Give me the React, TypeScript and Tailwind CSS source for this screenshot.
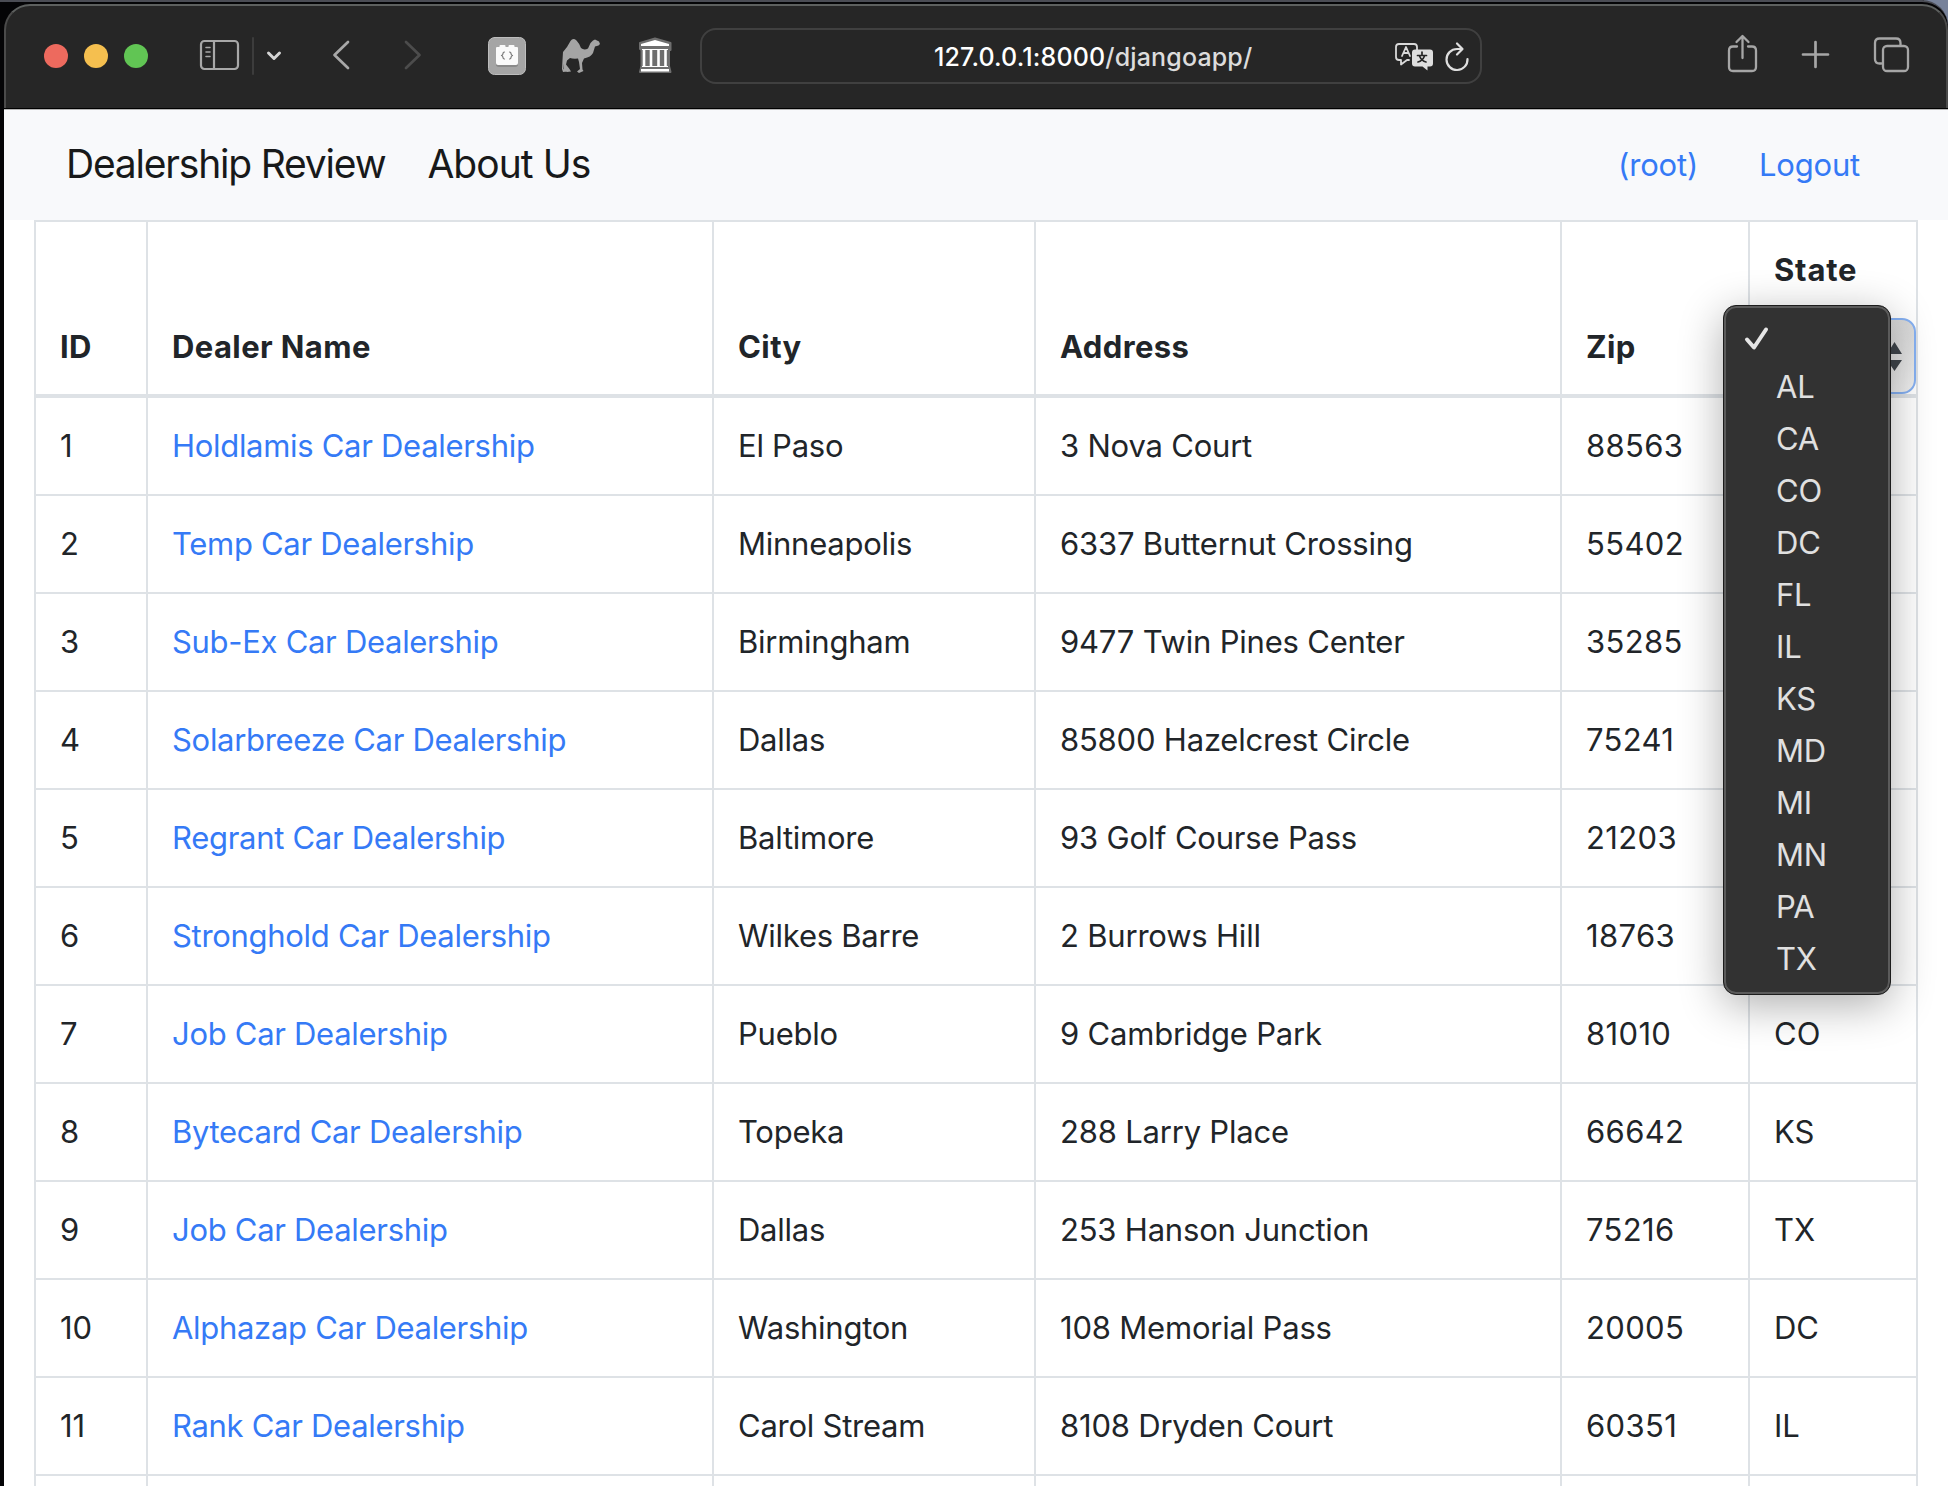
import React from "react";

const dealers: [string, string, string, string, string][] = [
  ["Holdlamis Car Dealership", "El Paso", "3 Nova Court", "88563", ""],
  ["Temp Car Dealership", "Minneapolis", "6337 Butternut Crossing", "55402", ""],
  ["Sub-Ex Car Dealership", "Birmingham", "9477 Twin Pines Center", "35285", ""],
  ["Solarbreeze Car Dealership", "Dallas", "85800 Hazelcrest Circle", "75241", ""],
  ["Regrant Car Dealership", "Baltimore", "93 Golf Course Pass", "21203", ""],
  ["Stronghold Car Dealership", "Wilkes Barre", "2 Burrows Hill", "18763", ""],
  ["Job Car Dealership", "Pueblo", "9 Cambridge Park", "81010", "CO"],
  ["Bytecard Car Dealership", "Topeka", "288 Larry Place", "66642", "KS"],
  ["Job Car Dealership", "Dallas", "253 Hanson Junction", "75216", "TX"],
  ["Alphazap Car Dealership", "Washington", "108 Memorial Pass", "20005", "DC"],
  ["Rank Car Dealership", "Carol Stream", "8108 Dryden Court", "60351", "IL"],
  ["", "", "", "", ""],
];

const states = ["AL", "CA", "CO", "DC", "FL", "IL", "KS", "MD", "MI", "MN", "PA", "TX"];

const cell = "border-r-2 border-b-2 border-[#dee2e6] pl-[24px] pt-[1px] flex items-center whitespace-nowrap";
const head = "border-r-2 border-[#dee2e6] pl-[24px] pb-[24px] flex items-end whitespace-nowrap tracking-[0.4px]";
const cols = "grid grid-cols-[112px_566px_322px_526px_188px_168px] border-l-2 border-[#dee2e6]";

function Toolbar() {
  return (
    <div className="relative h-[104px] shrink-0 rounded-t-[26px] border-2 border-b-0 border-[#5d605f] border-x-[#4a4a4a] bg-[#262626] flex items-start">
      <div className="mt-[38px] ml-[38px] flex gap-4">
        <span className="size-6 rounded-full bg-[#ed6a5e]" />
        <span className="size-6 rounded-full bg-[#f5bf4f]" />
        <span className="size-6 rounded-full bg-[#61c554]" />
      </div>
      <svg className="absolute -left-[6px] -top-[6px]" width="720" height="100" fill="none" strokeLinecap="round" strokeLinejoin="round">
        <g stroke="#a8a8a8" strokeWidth="2.2">
          <rect x="201" y="41" width="37" height="28" rx="3.5" />
          <path d="M214 41v28" />
          <path d="M206 47.5h4M206 52h4M206 56.500h4" strokeWidth="1.600" />
        </g>
        <path d="M253 38v36" stroke="#3c3c3c" strokeWidth="2" />
        <path d="M268.500 53l5.500 5.500 5.500-5.500" stroke="#d4d4d4" strokeWidth="3" />
        <path d="M348 42l-13.500 13L348 68" stroke="#a8a8a8" strokeWidth="2.700" />
        <path d="M406 42l13.500 13L406 68" stroke="#4c4c4c" strokeWidth="2.700" />
        <rect x="488.500" y="37.500" width="37" height="37" rx="6" fill="#a5a5a5" stroke="#bdbdbd" />
        <path d="M496 63.500h22v2q-1 1.500-3 1.500h-16q-2 0-3-1.500z" fill="#8a8a8a" />
        <path d="M497 47h2.500v-1q0-1 1-1h4q1 0 1 1v1h3v-1q0-1 1-1h4q1 0 1 1v1h2.500q1 0 1 1v15q0 2-2 2h-18q-2 0-2-2v-15q0-1 1-1z" fill="#fafafa" />
        <path d="M504.500 52q-1.500 0-1.500 1.500t-1.500 2q1.500.5 1.500 2t1.500 1.500M509.500 52q1.500 0 1.500 1.500t1.500 2q-1.500.5-1.500 2t-1.500 1.500" stroke="#777" strokeWidth="1.200" />
        <path d="M562.500 60L563 52L567 47L570.500 41Q573 37.500 576.500 40.500Q579 43 581 48Q584 50.500 588 48.500L590.500 43L593 40.500L595 39.500L599 41.500L600 44L598.500 45.500L595 46.500L593 53Q591 57 584 58.500L582 63L582.500 69.500L583.500 71L579 73L577 71.500L580 69L579 62L578 58.500Q573 59 570 58L567 60.500L566 64.500L569.500 69L571 71.500L567 72L564 69.500L564 63.500L563.500 69L567 71.500L563 72L562 69Z" fill="#a4a4a4" />
        <path d="M640 43L655 38.500L670.500 43V50H669V66L670.500 72H640L641.500 66V50L640 49Z" fill="#6e6e6e" stroke="#6e6e6e" strokeWidth="2" />
        <path d="M641 44L655 40L669 44V46H641zM642 49h26v1h-26zM642 66h26v1h-26zM641 69h28v2.500h-28z" fill="#fff" />
        <path d="M644 49v17.500M651 49v17.500M658.500 49v17.500M665.500 49v17.500" stroke="#fff" strokeWidth="2.600" strokeLinecap="butt" />
      </svg>
      <div className="absolute left-[694px] top-[22px] h-[56px] w-[782px] rounded-[16px] border-2 border-[#404040]">
        <div className="absolute left-[232px] top-[8px] whitespace-nowrap text-[25px] leading-[38px] tracking-[0.15px] text-[#dcdcdc]"><span className="text-white font-medium">127.0.0.1:8000</span><span className="font-[450]">/djangoapp/</span></div>
      </div>
      <svg className="absolute left-[1374px] -top-[6px]" width="570" height="100" viewBox="1380 0 570 100" fill="none" strokeLinecap="round" strokeLinejoin="round">
        <path d="M1409 60h-2l-6 4.500v-4.500h-2q-3 0-3-3v-10q0-3 3-3h15q3 0 3 3v3" stroke="#d9d9d9" strokeWidth="1.800" />
        <path d="M1402 56l4-9 4 9M1403.500 53h5" stroke="#d9d9d9" strokeWidth="1.800" />
        <path d="M1415 49.500h15q3 0 3 3v11q0 3-3 3h-2.500v4l-5-4h-7.500q-3 0-3-3v-11q0-3 3-3z" fill="#dedede" />
        <path d="M1422 52v2.500M1417.500 55.500h9M1419.500 56q2 5 6.500 6M1424.500 56q-2 5-6.500 6" stroke="#262626" strokeWidth="1.700" />
        <path d="M1461 49h-4a10.500 10.500 0 1 0 10.500 10" stroke="#dedede" strokeWidth="2.200" />
        <path d="M1457 43.500l5.500 5.500-5.500 5.500" stroke="#dedede" strokeWidth="2.200" />
        <g stroke="#a6a6a6" strokeWidth="2.300">
          <path d="M1737 46.500h-4q-4 0-4 4v16.500q0 4 4 4h19q4 0 4-4v-16.500q0-4-4-4h-4M1742.500 58V36.500M1736.500 42l6-6 6 6" />
          <path d="M1815.500 42v25M1803 54.500h25" strokeWidth="2.700" />
          <path d="M1881.500 63.500h-2q-4.500 0-4.500-4.500v-16q0-4.500 4.500-4.500h16.500q4.500 0 4.500 4.500v2.500" />
          <rect x="1883" y="46" width="25" height="25" rx="4" />
        </g>
      </svg>
    </div>
  );
}

function StateMenu() {
  return (
    <div className="absolute left-[1723px] top-[305px] h-[690px] w-[168px] rounded-[13px] border border-[#1c1c1c] bg-[#323232] pt-[55px] shadow-[inset_0_0_0_2px_#5b5b5b,0_10px_44px_rgba(0,0,0,0.32)]">
      <svg className="absolute left-[20px] top-[20px]" width="26" height="26" fill="none" stroke="#e6e6e6" strokeWidth="4" strokeLinecap="round" strokeLinejoin="round">
        <path d="M3 13.500l7 8L22 3.500" />
      </svg>
      {states.map((s) => (
        <div key={s} className="flex h-[52px] items-center pl-[52px] text-[31px] font-[420] tracking-[-0.2px] text-[#e0e0e0]">{s}</div>
      ))}
    </div>
  );
}

export default function App() {
  return (
    <div className="relative h-[1486px] w-[1948px] overflow-hidden bg-[#040406] pl-1 pt-1 font-['Inter',sans-serif] text-[#212529]">
      <div className="absolute right-0 top-0 h-6 w-6 bg-[#77829a]" />
      <div className="absolute inset-x-0 top-0 h-10 rounded-tr-[26px] border-t-2 border-[#4a4c54] bg-[#040406]" />
      <Toolbar />
      <div className="relative h-[1378px] border-t border-black bg-white">
        <nav className="flex h-[111px] items-center border-t border-[#b5b5b5] bg-[#f8f9fb] pl-[62px] pr-[88px]">
          <span className="-mt-[2px] text-[39px] font-[420] tracking-[-1.2px] text-[#18191a]">Dealership Review</span>
          <span className="-mt-[2px] ml-[42px] text-[39px] font-[420] tracking-[-0.95px] text-[#18191a]">About Us</span>
          <span className="ml-auto text-[31px] font-[420] tracking-[-0.2px] text-[#357af6]">(root)</span>
          <span className="ml-[61px] text-[31px] font-[420] tracking-[-0.2px] text-[#357af6]">Logout</span>
        </nav>
        <div className="ml-[30px] w-[1884px] text-[31px]">
          <div className={`${cols} h-[178px] border-t-2 border-b-4 font-bold`}>
            <div className={head}>ID</div>
            <div className={head}>Dealer Name</div>
            <div className={head}>City</div>
            <div className={head}>Address</div>
            <div className={head}>Zip</div>
            <div className="relative border-r-2 border-[#dee2e6] pl-[24px] pt-[25px] tracking-[0.8px]">
              State
              <div className="absolute right-0 top-[96px] h-[76px] w-[150px] rounded-[14px] border-2 border-[#86b1f3] bg-linear-to-b from-[#d8d8d8] to-[#f0f0f0]">
                <svg className="absolute right-[12px] top-[22px]" width="15" height="30" fill="#40464c">
                  <path d="M0 12L7.500 0L15 12zM0 18h15L7.500 29z" />
                </svg>
              </div>
            </div>
          </div>
          {dealers.map(([name, city, address, zip, state], i) => (
            <div key={i} className={`${cols} h-[98px] font-[420]`}>
              <div className={cell}>{name ? i + 1 : ""}</div>
              <div className={`${cell} tracking-[-0.3px] text-[#357af6]`}>{name}</div>
              <div className={`${cell} tracking-[-0.25px]`}>{city}</div>
              <div className={`${cell} tracking-[-0.2px]`}>{address}</div>
              <div className={`${cell} tracking-[0.35px]`}>{zip}</div>
              <div className={cell}>{state}</div>
            </div>
          ))}
        </div>
      </div>
      <StateMenu />
    </div>
  );
}
